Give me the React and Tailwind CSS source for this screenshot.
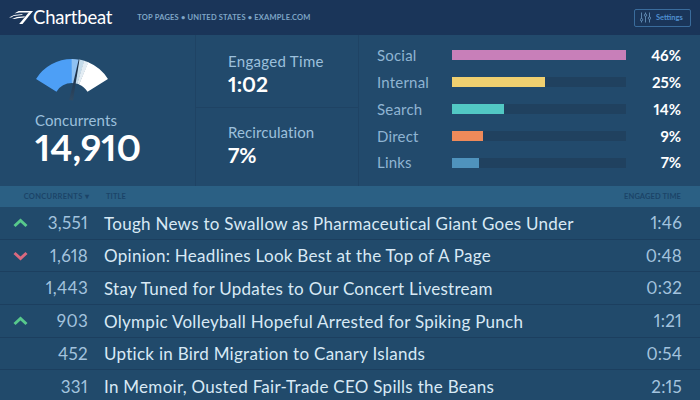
import React from 'react';

const sources = [
  { name: 'Social', width: 'w-[174px]', color: 'bg-[#c87fb9]', pct: '46%' },
  { name: 'Internal', width: 'w-[93px]', color: 'bg-[#f0d070]', pct: '25%' },
  { name: 'Search', width: 'w-[52px]', color: 'bg-[#52c8c4]', pct: '14%' },
  { name: 'Direct', width: 'w-[31px]', color: 'bg-[#ee8a5a]', pct: '9%' },
  { name: 'Links', width: 'w-[27px]', color: 'bg-[#4f93bd]', pct: '7%' },
];

const pages = [
  { trend: 'up', count: '3,551', title: 'Tough News to Swallow as Pharmaceutical Giant Goes Under', time: '1:46' },
  { trend: 'down', count: '1,618', title: 'Opinion: Headlines Look Best at the Top of A Page', time: '0:48' },
  { count: '1,443', title: 'Stay Tuned for Updates to Our Concert Livestream', time: '0:32' },
  { trend: 'up', count: '903', title: 'Olympic Volleyball Hopeful Arrested for Spiking Punch', time: '1:21' },
  { count: '452', title: 'Uptick in Bird Migration to Canary Islands', time: '0:54' },
  { count: '331', title: 'In Memoir, Ousted Fair-Trade CEO Spills the Beans', time: '2:15' },
];

// ring segment of the gauge, angles in degrees from straight up
function wedge(from, to, r = 42.4, inner = 18.3) {
  const cx = 37;
  const cy = 42.4;
  const pt = (rad, deg) => {
    const a = (deg * Math.PI) / 180;
    return `${(cx + rad * Math.sin(a)).toFixed(2)} ${(cy - rad * Math.cos(a)).toFixed(2)}`;
  };
  return `M${pt(inner, from)} L${pt(r, from)} A${r} ${r} 0 0 1 ${pt(r, to)} L${pt(inner, to)} A${inner} ${inner} 0 0 0 ${pt(inner, from)} Z`;
}

function Gauge() {
  return (
    <svg width="74" height="44" viewBox="0 0 74 44" className="block">
      <defs>
        <linearGradient id="needle" x1="0" y1="0" x2="0" y2="1">
          <stop offset="0" stopColor="#14263f" />
          <stop offset="1" stopColor="#2f4a63" />
        </linearGradient>
      </defs>
      <path d={wedge(-58, 0)} fill="#4d9ff6" />
      <path d={wedge(-0.5, 10)} fill="#8fc1f2" />
      <path d={wedge(9.5, 17)} fill="#c4dbea" />
      <path d={wedge(16.5, 23)} fill="#e3edf4" />
      <path d={wedge(22.5, 58)} fill="#ffffff" />
      <path d="M43.7 0.6 L44.4 0.8 L38 41.5 L34.2 41 Z" fill="url(#needle)" />
    </svg>
  );
}

function Logo() {
  return (
    <svg width="24" height="15" viewBox="0 0 24 15" className="block">
      <path d="M0 7.4 L5 4.9 L14 3.9 L12.8 5.1 L4.6 6 L2.2 7.4 Z" fill="#ffffff" />
      <path d="M5.4 3.6 L9.6 1 L23.6 1 L22.2 2.4 L10.5 2.5 Z" fill="#ffffff" />
      <path d="M3 9 L8 7 L16 6.2 L15 7.6 L8.6 8.3 L5.6 9 Z" fill="#ffffff" />
      <path d="M22 1 L24 1 L13.5 14 L10.2 14 L19.5 2.8 Z" fill="#ffffff" />
    </svg>
  );
}

function SettingsButton() {
  return (
    <div className="flex h-[18px] w-[57px] items-center gap-[5px] rounded-[2px] border border-[#3a6c9c] pl-[5px] text-[7.5px] font-bold text-[#4f8fd0]">
      <svg width="11" height="11" viewBox="0 0 11 11" fill="none" stroke="#6f9cc4" strokeWidth="0.8" className="block">
        <path d="M1.5 0.5 V6.5 M1.5 9 V10.5 M5.5 0.5 V2 M5.5 4.5 V10.5 M9.5 0.5 V5 M9.5 7.5 V10.5" />
        <circle cx="1.5" cy="7.7" r="1.2" />
        <circle cx="5.5" cy="3.2" r="1.2" />
        <circle cx="9.5" cy="6.2" r="1.2" />
      </svg>
      <span>Settings</span>
    </div>
  );
}

function Trend({ trend }) {
  if (!trend) return null;
  const up = trend === 'up';
  return (
    <svg width="15" height="10" viewBox="0 0 15 10" fill="none" className="block">
      <path
        d={up ? 'M1.5 8 L7.5 2.5 L13.5 8' : 'M1.5 2 L7.5 7.5 L13.5 2'}
        stroke={up ? '#58c98c' : '#d9697f'}
        strokeWidth="3"
      />
    </svg>
  );
}

export default function App() {
  return (
    <div className="h-[400px] w-[700px] overflow-hidden bg-[#224a6c] font-['Lato',sans-serif] proportional-nums">
      <header className="flex h-[35px] items-center bg-[#1a3559] pr-[9px] pl-[9px]">
        <Logo />
        <span className="text-[18.5px] leading-none tracking-[-0.2px] text-white">Chartbeat</span>
        <span className="ml-[25px] text-[7.5px] font-bold tracking-[0.2px] text-[#7fa6c6]">
          TOP PAGES • UNITED STATES • EXAMPLE.COM
        </span>
        <div className="ml-auto">
          <SettingsButton />
        </div>
      </header>

      <section className="flex h-[151px]">
        <div className="w-[196px] border-r border-[#1f4364] pt-[24px] pl-[35px]">
          <Gauge />
          <div className="mt-[8px] text-[15px] leading-[18px] tracking-[0.1px] text-[#9cc0dc]">Concurrents</div>
          <div className="text-[37px] leading-[36px] font-bold text-white">14,910</div>
        </div>

        <div className="flex w-[163px] flex-col border-r border-[#1f4364]">
          <div className="h-[73px] border-b border-[#1f4364] pt-[17px] pl-[32px]">
            <div className="text-[15px] leading-[18px] tracking-[0.3px] text-[#9cc0dc]">Engaged Time</div>
            <div className="text-[21px] leading-[28px] font-bold text-white">1:02</div>
          </div>
          <div className="pt-[15px] pl-[32px]">
            <div className="text-[15px] leading-[18px] tracking-[0.1px] text-[#9cc0dc]">Recirculation</div>
            <div className="text-[21px] leading-[28px] font-bold text-white">7%</div>
          </div>
        </div>

        <div className="flex-1 pt-[7px] pr-[19px] pl-[18px]">
          {sources.map((s) => (
            <div key={s.name} className="flex h-[26.8px] items-center">
              <div className="w-[75px] text-[15px] tracking-[0.2px] text-[#8fb4d2]">{s.name}</div>
              <div className="h-[10px] w-[174px] bg-[#20415f]">
                <div className={`h-full ${s.width} ${s.color}`} />
              </div>
              <div className="ml-auto text-[15px] font-bold text-white">{s.pct}</div>
            </div>
          ))}
        </div>
      </section>

      <div className="flex h-[21px] items-center bg-[#2b6084] pr-[19px] text-[7.5px] font-bold tracking-[0.1px] text-[#1b4468]">
        <div className="w-[89px] text-right tracking-[0.3px]">CONCURRENTS ▾</div>
        <div className="ml-[17px]">TITLE</div>
        <div className="ml-auto">ENGAGED TIME</div>
      </div>

      {pages.map((p) => (
        <div key={p.title} className="flex h-[32.7px] items-center border-b border-[#1c3f5f] bg-[#214a6b] pr-[18px]">
          <div className="flex w-[28px] justify-end">
            <Trend trend={p.trend} />
          </div>
          <div className="w-[60px] text-right text-[17px] tracking-[0.3px] text-[#a3c3de]">{p.count}</div>
          <div className="ml-[16px] pt-px text-[17px] tracking-[0.28px] text-[#d8e9f5]">{p.title}</div>
          <div className="ml-auto text-[17px] tracking-[0.2px] text-[#a3c3de]">{p.time}</div>
        </div>
      ))}
    </div>
  );
}
